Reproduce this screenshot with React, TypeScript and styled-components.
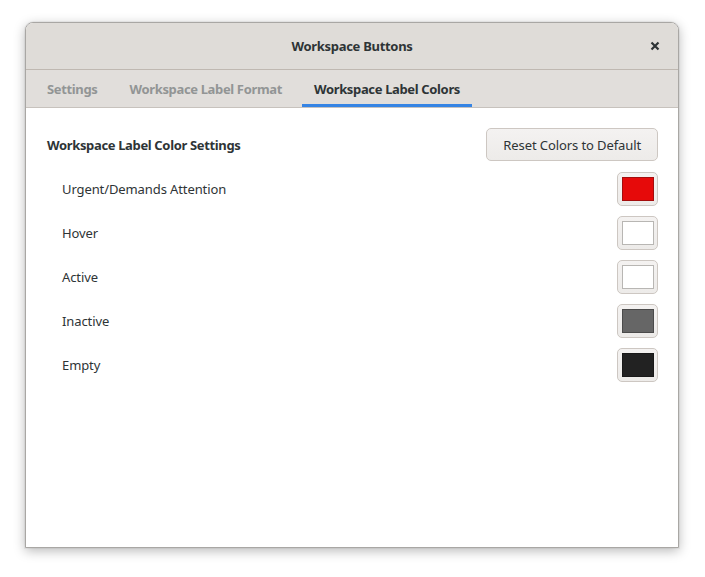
import React from "react";
import styled, { createGlobalStyle } from "styled-components";

const Global = createGlobalStyle`
  html, body { margin: 0; padding: 0; background: #ffffff; }
  body { font-family: "Noto Sans", "Open Sans", sans-serif; }
`;

const Page = styled.div`
  padding: 22px 0 0 25px;
  width: 705px;
  height: 577px;
  box-sizing: border-box;
`;

const Window = styled.div`
  width: 654px;
  height: 526px;
  box-sizing: border-box;
  border: 1px solid #a9a7a4;
  border-radius: 8px 8px 0 0;
  background: #ffffff;
  display: flex;
  flex-direction: column;
  overflow: hidden;
  box-shadow: 0 3px 12px rgba(0, 0, 0, 0.28), 0 0 0 1px rgba(0, 0, 0, 0.04);
`;

const Header = styled.div`
  height: 46px;
  flex: none;
  background: #dfdcd8;
  border-bottom: 1px solid #bfb8b1;
  display: grid;
  grid-template-columns: 1fr auto 1fr;
  align-items: center;
  padding: 0 15px;
`;

const Title = styled.div`
  grid-column: 2;
  font-size: 13px;
  font-weight: 700;
  letter-spacing: -0.3px;
  color: #2e3436;
`;

const Close = styled.div`
  grid-column: 3;
  justify-self: end;
  width: 16px;
  height: 16px;
  display: flex;
  align-items: center;
  justify-content: center;
  color: #2e3436;
`;

const TabBar = styled.div`
  height: 37px;
  flex: none;
  background: #e1dedb;
  border-bottom: 1px solid #c7c2bd;
  display: flex;
  gap: 8px;
  padding: 0 9px;
`;

const Tab = styled.div<{ $active?: boolean }>`
  padding: 0 12px;
  display: flex;
  align-items: center;
  font-size: 13px;
  font-weight: 700;
  letter-spacing: -0.35px;
  color: ${(p) => (p.$active ? "#2e3436" : "#929595")};
  box-shadow: ${(p) => (p.$active ? "inset 0 -3px 0 #3584e4" : "none")};
`;

const Content = styled.div`
  flex: 1;
  padding: 20px 20px 0 21px;
  display: flex;
  flex-direction: column;
`;

const SectionRow = styled.div`
  display: flex;
  justify-content: space-between;
  align-items: center;
  height: 33px;
  margin-bottom: 11px;
`;

const SectionTitle = styled.div`
  font-size: 13px;
  font-weight: 700;
  letter-spacing: -0.35px;
  color: #2e3436;
`;

const Button = styled.div`
  height: 33px;
  box-sizing: border-box;
  padding: 0 16px;
  display: flex;
  align-items: center;
  border: 1px solid #cdc7c2;
  border-radius: 5px;
  background: linear-gradient(#f4f2f1, #edebe9);
  font-size: 13px;
  letter-spacing: -0.1px;
  color: #2e3436;
`;

const Row = styled.div`
  display: flex;
  justify-content: space-between;
  align-items: center;
  height: 33px;
  margin-bottom: 11px;
  padding-left: 15px;
`;

const Label = styled.div`
  font-size: 13px;
  letter-spacing: -0.1px;
  color: #2e3436;
`;

const SwatchButton = styled.div`
  width: 41px;
  height: 34px;
  box-sizing: border-box;
  border: 1px solid #cdc7c2;
  border-radius: 5px;
  background: linear-gradient(#f4f2f1, #edebe9);
  display: flex;
  align-items: center;
  justify-content: center;
`;

const Swatch = styled.div<{ $color: string; $border: string }>`
  width: 32px;
  height: 24px;
  box-sizing: border-box;
  background: ${(p) => p.$color};
  border: 1px solid ${(p) => p.$border};
`;

const rows = [
  { label: "Urgent/Demands Attention", color: "#e60a0a", border: "#a40d0d" },
  { label: "Hover", color: "#ffffff", border: "#b8b6b3" },
  { label: "Active", color: "#ffffff", border: "#b8b6b3" },
  { label: "Inactive", color: "#666666", border: "#4b4b4b" },
  { label: "Empty", color: "#222222", border: "#191919" },
];

export default function App() {
  return (
    <Page>
      <Global />
      <Window>
        <Header>
          <Title>Workspace Buttons</Title>
          <Close>
            <svg width="10" height="10" viewBox="0 0 10 10">
              <path d="M1.5 1.5 L8.5 8.5 M8.5 1.5 L1.5 8.5" stroke="#2e3436" strokeWidth="2.2" strokeLinecap="butt" />
            </svg>
          </Close>
        </Header>
        <TabBar>
          <Tab>Settings</Tab>
          <Tab>Workspace Label Format</Tab>
          <Tab $active>Workspace Label Colors</Tab>
        </TabBar>
        <Content>
          <SectionRow>
            <SectionTitle>Workspace Label Color Settings</SectionTitle>
            <Button>Reset Colors to Default</Button>
          </SectionRow>
          {rows.map((r) => (
            <Row key={r.label}>
              <Label>{r.label}</Label>
              <SwatchButton>
                <Swatch $color={r.color} $border={r.border} />
              </SwatchButton>
            </Row>
          ))}
        </Content>
      </Window>
    </Page>
  );
}
